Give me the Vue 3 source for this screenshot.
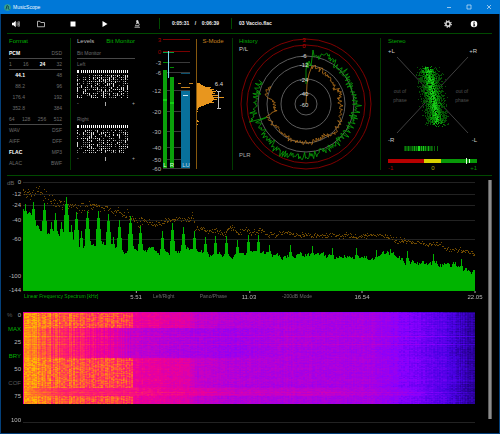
<template>
  <div class="window">
    <header class="titlebar">
      <svg class="logo" viewBox="0 0 14 14" width="7" height="7">
        <circle cx="7" cy="7" r="6.5" fill="#3aa58c"/>
        <path d="M4 11 6 3l3 2-1 4 3 2" fill="none" stroke="#0c3d52" stroke-width="1.8"/>
      </svg>
      <span class="app-name">MusicScope</span>
      <button class="win-btn" aria-label="Minimize"><svg viewBox="0 0 6 6" width="6" height="6"><path d="M1 3.5h4"/></svg></button>
      <button class="win-btn" aria-label="Maximize"><svg viewBox="0 0 6 6" width="6" height="6"><path d="M1 1h4v4H1z"/></svg></button>
      <button class="win-btn" aria-label="Close"><svg viewBox="0 0 6 6" width="6" height="6"><path d="m1 1 4 4M5 1 1 5"/></svg></button>
    </header>

    <nav class="toolbar">
      <button class="tool first" aria-label="Volume">
        <svg viewBox="0 0 16 16" width="8" height="8"><path d="M0 5.5h3l4.5-4v13l-4.5-4H0z" fill="#fff"/><path d="M9.5 5q2 3 0 6M11.500 3.500q3.500 4.500 0 9M13.500 2q4.500 6 0 12" fill="none" stroke="#ddd" stroke-width="1.3"/></svg>
      </button>
      <button class="tool" aria-label="Open file">
        <svg viewBox="0 0 16 16" width="8" height="8"><path d="M1 13.500V2.500h5l1.500 2.500H15v8.500z" fill="none" stroke="#ccc" stroke-width="1.7"/></svg>
      </button>
      <button class="tool" aria-label="Stop">
        <svg viewBox="0 0 16 16" width="8" height="8"><path d="M3 3h10v10H3z" fill="#fff"/></svg>
      </button>
      <button class="tool" aria-label="Play">
        <svg viewBox="0 0 16 16" width="8" height="8"><path d="M3 2l10 6-10 6z" fill="#fff"/></svg>
      </button>
      <button class="tool" aria-label="Analyze">
        <svg viewBox="0 0 16 16" width="8" height="8"><path d="M7 1.500l2.500-.8 1.500 5-3 1zM3 14.500h11" fill="#ddd" stroke="#ddd" stroke-width="1.500"/><path d="M4 11.500h6M10.500 5.500q4 3 0 7.500M5.500 8.500l2.500-2" fill="none" stroke="#ddd" stroke-width="1.700"/></svg>
      </button>
      <div class="time"><span>0:05:31</span><span>/</span><span>0:06:39</span></div>
      <div class="file">03 Vaccio.flac</div>
      <button class="tool side" aria-label="Settings">
        <svg viewBox="0 0 16 16" width="8" height="8">
          <circle cx="8" cy="8" r="4.300" fill="none" stroke="#ddd" stroke-width="3"/>
          <circle cx="8" cy="8" r="6.500" fill="none" stroke="#ddd" stroke-width="2.500" stroke-dasharray="2.550 2.550"/>
        </svg>
      </button>
      <button class="tool side" aria-label="Info">
        <svg viewBox="0 0 16 16" width="8" height="8"><circle cx="8" cy="8" r="6.500" fill="#fff"/><path d="M7 3.500h2.500v2H7zM6 7h3.500v4.500h1v1H6v-1h1V8H6z" fill="#000"/></svg>
      </button>
    </nav>

    <section class="panels">
      <div class="panel format">
        <h2 class="green">Format</h2>
        <div class="row ruled"><b>PCM</b><span>DSD</span></div>
        <div class="row ruled"><span>1</span><span>16</span><b>24</b><span>32</span></div>
        <div v-for="(r, i) in rates" :key="r[0]" class="row">
          <component :is="i === 0 ? 'b' : 'span'" class="rate">{{ r[0] }}</component><span>{{ r[1] }}</span>
        </div>
        <div class="row ruled"><span>64</span><span>128</span><span>256</span><span>512</span></div>
        <div v-for="f in containers" :key="f[0]" class="row">
          <component :is="f[0] === 'FLAC' ? 'b' : 'span'">{{ f[0] }}</component><span>{{ f[1] }}</span>
        </div>
      </div>

      <div class="panel levels divided">
        <div class="tabs">
          <button class="tab">Levels</button>
          <button class="tab green">Bit Monitor</button>
        </div>
        <div class="row ruled"><span>Bit Monitor</span></div>
        <div v-for="ch in channels" :key="ch.name" class="channel">
          <div class="row"><span>{{ ch.name }}</span></div>
          <svg class="bits" viewBox="0 0 58 28" shape-rendering="crispEdges">
            <path :d="ch.head" fill="#fff"/>
            <path :d="ch.dim" fill="#888"/>
            <path :d="ch.lit" fill="#ddd"/>
          </svg>
          <div class="row balance"><span>-</span><i></i><span>+</span></div>
        </div>
      </div>

      <div class="panel">
        <svg class="chart" viewBox="0 0 87 132">
          <g shape-rendering="crispEdges">
            <rect v-for="s in meterScale" :key="s.db" x="18" :y="s.y" width="27" height="1" :fill="s.db >= 0 ? '#7a0000' : '#3a3a3a'"/>
            <rect x="18" y="14" width="11" height="1" fill="#00a040"/>
            <rect x="18" y="24" width="5" height="1" fill="#008a00"/>
            <rect x="25" y="29" width="4" height="1" fill="#008a00"/>
            <rect x="18" y="32" width="4" height="98" fill="#0aa00a"/>
            <rect x="25" y="39" width="4" height="91" fill="#0aa00a"/>
            <rect x="18" y="61" width="4" height="2" fill="#12d012"/>
            <rect x="25" y="64" width="4" height="2" fill="#12d012"/>
            <rect x="23" y="13" width="1" height="27" fill="#7fd8f0"/>
            <rect x="36" y="53" width="9" height="77" fill="#08709c"/>
            <rect x="36" y="35" width="9" height="1" fill="#0a506e"/>
            <rect x="38" y="57" width="5" height="1" fill="#cfe8f4"/>
            <path d="M33 45h3v1h-3zM44 45h4v1h-4zM36 49h9v1h-9z" fill="#c88420"/>
            <rect x="51" y="1" width="1" height="130" fill="#86580e"/>
            <path :d="loudness" fill="#e8961e"/>
            <path d="M71 53h1v-1h-1z" fill="#bbb"/>
            <path d="M72 53h4v1h-2v16h2v1h-4v-1h1V54h-1z" fill="#bbb"/>
          </g>
          <text v-for="s in meterScale" :key="'t' + s.db" x="16" :y="s.y + 3" class="axis end" :fill="s.db >= 0 ? '#a00000' : '#bbb'">{{ s.db }}</text>
          <text x="20" y="129" class="axis mid" fill="#dfd">L</text>
          <text x="27" y="129" class="axis mid" fill="#dfd">R</text>
          <text x="41" y="129" class="axis mid" fill="#b8dcf0">LU</text>
          <text x="74" y="48" class="axis mid" fill="#ddd">6.4</text>
          <text x="68" y="5" class="axis mid" fill="#c88420">S-Mode</text>
        </svg>
      </div>

      <div class="panel divided">
        <svg class="chart" viewBox="0 0 148 132">
          <g fill="none">
            <circle cx="74" cy="66" r="65" stroke="#800000"/>
            <circle cx="74" cy="66" r="59" stroke="#800000"/>
            <circle v-for="r in [48, 39, 25, 11]" :key="r" cx="74" cy="66" :r="r" stroke="#5c5c5c"/>
            <polyline :points="ringLufs" stroke="#b8741c" stroke-width="0.800"/>
            <polyline :points="ringPeak" stroke="#089a08" stroke-width="0.900"/>
          </g>
          <text v-for="l in ringLabels" :key="l[0]" x="72" :y="l[1] + 2" class="axis mid" :fill="l[0] >= 0 ? '#c00000' : '#ddd'">{{ l[0] }}</text>
          <text x="7" y="5" class="axis" fill="#00a800">History</text>
          <text x="7" y="13" class="axis" fill="#ccc">P/L</text>
          <text x="7" y="119" class="axis" fill="#aaa">PLR</text>
        </svg>
      </div>

      <div class="panel divided">
        <svg class="chart" viewBox="0 0 119 132">
          <path d="M17 19 88 95M17 95 88 19" stroke="#404040" fill="none"/>
          <g shape-rendering="crispEdges">
            <path :d="cloud[0]" fill="#055005"/>
            <path :d="cloud[1]" fill="#079007"/>
            <path :d="cloud[2]" fill="#18c818"/>
            <rect x="24" y="108" width="29" height="5" fill="#064d06"/>
            <rect v-for="(b, i) in stripes" :key="i" :x="b[0]" y="108" width="1" height="5" :fill="b[1]"/>
            <rect x="8" y="121" width="36" height="4" fill="#b80000"/>
            <rect x="44" y="121" width="17" height="4" fill="#d8d000"/>
            <rect x="61" y="121" width="36" height="4" fill="#089808"/>
            <path d="M86 120h1v6h-1zM89 121h1v4h-1z" fill="#dfd"/>
          </g>
          <text x="8" y="5" class="axis" fill="#00a800">Stereo</text>
          <text x="8" y="15" class="axis" fill="#ccc">+L</text>
          <text x="97" y="15" class="axis end" fill="#ccc">+R</text>
          <text x="8" y="104" class="axis" fill="#ccc">-R</text>
          <text x="97" y="104" class="axis end" fill="#ccc">-L</text>
          <g class="small mid" fill="#505050">
            <text x="20" y="55">out of</text>
            <text x="20" y="64">phase</text>
            <text x="82" y="55">out of</text>
            <text x="82" y="64">phase</text>
          </g>
          <text x="8" y="132" class="axis" fill="#b00000">-1</text>
          <text x="53" y="132" class="axis mid" fill="#b8b000">0</text>
          <text x="97" y="132" class="axis end" fill="#009000">+1</text>
        </svg>
      </div>
    </section>

    <main class="lower">
      <div class="charts">
        <section class="spectrum">
          <svg class="gutter" viewBox="0 0 22 116" width="22" height="116">
            <text x="6" y="9" class="axis" fill="#666">dB</text>
            <text v-for="g in dbGrid" :key="g.db" x="20" :y="g.y + 2" class="axis end" fill="#bbb">{{ g.db }}</text>
          </svg>
          <svg class="plot" viewBox="0 0 452 116" preserveAspectRatio="none" shape-rendering="crispEdges">
            <rect v-for="g in dbGrid.slice(0, 5)" :key="g.db" x="0" :y="g.y" width="452" height="1" fill="#222"/>
            <path :d="maxDots" fill="#704a00"/>
            <path :d="spectrum" fill="#00b400"/>
          </svg>
          <div class="freqs">
            <div class="quarter"><button class="green">Linear Frequency Spectrum [kHz]</button><span class="tick">5.51</span></div>
            <div class="quarter modes"><button>Left/Right</button><button>Pano/Phase</button><span class="tick">11.03</span></div>
            <div class="quarter range"><button>-200dB Mode</button><span class="tick">16.54</span></div>
            <div class="quarter"><span class="tick">22.05</span></div>
          </div>
        </section>

        <section class="spectrogram">
          <div class="percent">
            <div><span class="unit">%</span><span>0</span></div>
            <button class="green">MAX</button>
            <span>25</span>
            <button class="green">BRY</button>
            <span>50</span>
            <button>COF</button>
            <span>75</span>
          </div>
          <canvas ref="heat" width="452" height="92"></canvas>
          <span class="hundred">100</span>
          <div class="floor"></div>
        </section>
      </div>
      <div class="scrollbar"></div>
    </main>
  </div>
</template>

<script setup>
import { ref, onMounted } from 'vue'

const heat = ref(null)

const rates = [['44.1', '48'], ['88.2', '96'], ['176.4', '192'], ['352.8', '384']]
const containers = [['WAV', 'DSF'], ['AIFF', 'DFF'], ['FLAC', 'MP3'], ['ALAC', 'BWF']]

// seeded so that the traces look the same on every load
function makeRandom(seed) {
  let s = seed
  return () => {
    s = (s * 1664525 + 1013904223) >>> 0
    return s / 4294967296
  }
}
function lerp(points, x) {
  if (x <= points[0][0]) return points[0][1]
  for (let i = 1; i < points.length; i++) {
    const [x1, y1] = points[i]
    const [x0, y0] = points[i - 1]
    if (x <= x1) return y0 + (y1 - y0) * (x - x0) / (x1 - x0)
  }
  return points[points.length - 1][1]
}
const dot = (x, y, w = 1, h = 1) => `M${x} ${y}h${w}v${h}h-${w}z`

function bitMatrix(seed) {
  const rnd = makeRandom(seed)
  let head = '', dim = '', lit = ''
  for (let c = 0; c < 26; c++) {
    if (c !== 1) head += c === 0 ? dot(0, 0, 2, 3) : dot(c * 2, 0, 1, 3)
    const density = c === 0 ? 0.8 : c < 3 ? 0.2 : 0.5 + rnd() * 0.4
    for (let r = 0; r < 12; r++) {
      if (rnd() > density) continue
      if (rnd() < 0.45) dim += dot(c * 2, 5 + r * 2, 1, 1)
      else lit += dot(c * 2, 5 + r * 2, 1, rnd() < 0.4 && r < 11 ? 2 : 1)
    }
  }
  return { head, dim, lit }
}
const channels = [
  { name: 'Left', ...bitMatrix(11) },
  { name: 'Right', ...bitMatrix(29) },
]

const meterScale = [[3, 1], [0, 13], [-3, 24], [-6, 34], [-12, 52], [-20, 73], [-30, 93], [-40, 109], [-50, 121], [-60, 130]]
  .map(([db, y]) => ({ db, y }))

const loudnessWidths = [3, 4, 6, 8, 14, 13, 17, 15, 19, 16, 18, 15, 22, 16, 27, 17, 20, 16, 15, 17, 12, 9, 7, 4, 2, 1, 1, 0, 1]
const loudness = loudnessWidths.map((w, i) => w ? dot(52, 45 + i, w) : '').join('') + dot(52, 82, 1) + dot(52, 83, 2) + dot(52, 86, 1)

const ringLabels = [[3, 2], [0, 8], [-6, 18], [-12, 27], [-24, 42], [-40, 56], [-60, 67]]
const polar = (deg, r) => {
  const a = deg * Math.PI / 180
  return `${(74 + Math.sin(a) * r).toFixed(1)},${(66 - Math.cos(a) * r).toFixed(1)}`
}
function ring(seed, start, shape, noise) {
  const rnd = makeRandom(seed)
  const pts = [...start]
  for (let d = 10; d <= 297; d += 1.2) pts.push(polar(d, lerp(shape, d) + (rnd() + rnd() - 1) * noise))
  return pts.join(' ')
}
const ringPeak = ring(5, ['74,46', '74,32', '75,24', '76,30', '77,23', '79,28', '81,12'],
  [[10, 48], [20, 53], [40, 50], [60, 48], [90, 51], [120, 49], [150, 49], [180, 53], [210, 53], [240, 51], [250, 53], [251, 38], [252, 55], [270, 51], [297, 49]], 6)
const ringLufs = ring(8, ['74,66', '75,46', '77,36', '80,28'],
  [[10, 38], [30, 37], [45, 35], [60, 33], [70, 35], [90, 34], [110, 37], [135, 40], [150, 37], [180, 39], [230, 38], [252, 40], [258, 30], [275, 32], [282, 40], [297, 40]], 3)

function stereoCloud() {
  const rnd = makeRandom(77)
  const layers = ['', '', '']
  for (let i = 0; i < 2200; i++) {
    const along = rnd()
    const off = (rnd() + rnd() + rnd() + rnd() - 2) * 9
    const x = Math.round(48 + along * 9 + off)
    const y = Math.round(31 + along * 54 + (rnd() + rnd() - 1) * 5)
    const near = Math.abs(off) / 8
    const level = rnd() > near + 0.6 ? 2 : rnd() > near + 0.1 ? 1 : 0
    layers[level] += dot(x, y)
  }
  return layers
}
const cloud = stereoCloud()
const stripes = [[25, '#0b7a0b'], [28, '#0a940a'], [32, '#0c7c0c'], [34, '#10b010'], [36, '#0b8a0b'], [38, '#1de01d'], [39, '#1de01d'], [41, '#12b812'], [43, '#18d018'], [45, '#0ca00c'], [46, '#064006'], [48, '#14b414'], [51, '#0a700a'], [54, '#086008'], [57, '#0a6a0a']]

const dbGrid = [[0, 6], [-12, 18], [-24, 29], [-40, 44], [-60, 63], [-100, 100], [-144, 114]].map(([db, y]) => ({ db, y }))

const noiseFloor = [[0, 34], [5, 37], [10, 44], [15, 49], [20, 53], [27, 58], [38, 60], [45, 67], [60, 69], [75, 67], [90, 71], [100, 75], [125, 74], [145, 77], [165, 74], [190, 79], [212, 81], [225, 75], [240, 78], [260, 80], [290, 79], [320, 80], [350, 83], [372, 77], [380, 85], [400, 88], [430, 89], [440, 93], [452, 97]]
const peaks = [[2, 28], [10, 26], [21, 27], [28, 46], [32, 37], [38, 46], [43, 21], [48, 49], [53, 36], [58, 55], [64, 35], [75, 35], [85, 38], [90, 61], [96, 44], [107, 40], [117, 50], [139, 55], [149, 47], [160, 51], [171, 55], [182, 61], [192, 60], [203, 60], [214, 64], [225, 59], [235, 59], [246, 69], [267, 69], [289, 70], [309, 72], [333, 72], [353, 74], [367, 73], [384, 75], [410, 78], [438, 83]]

function buildSpectrum() {
  const rnd = makeRandom(41)
  let d = 'M0 115V59'
  let noise = 0
  for (let x = 0; x < 452; x++) {
    noise = noise * 0.6 + (rnd() - 0.5) * 5
    let y = lerp(noiseFloor, x) + noise
    for (const [px, py] of peaks) {
      const gap = Math.abs(x - px)
      if (gap < 4) y = Math.min(y, py + gap * gap * 2.6 + gap * 4)
    }
    d += `H${x}V${Math.round(y)}`
  }
  return d + 'H452V115z'
}
const spectrum = buildSpectrum()

const maxCurve = [[0, 18], [7, 19], [15, 14], [24, 21], [34, 27], [44, 28], [54, 31], [74, 29], [87, 34], [94, 34], [107, 39], [114, 46], [120, 44], [130, 48], [140, 46], [150, 43], [167, 44], [169, 38], [172, 52], [184, 54], [194, 54], [200, 58], [209, 51], [215, 57], [222, 53], [229, 56], [237, 53], [244, 59], [265, 56], [270, 59], [360, 59], [374, 64], [394, 66], [414, 68], [427, 73], [440, 74], [452, 79]]
function buildDots() {
  const rnd = makeRandom(97)
  let d = ''
  for (let x = 0; x < 452; x++) {
    const spread = x < 120 ? 9 : 5
    const n = rnd() < 0.45 ? 2 : 1
    for (let i = 0; i < n; i++) d += dot(x, Math.round(lerp(maxCurve, x) + (rnd() + rnd() - 1) * spread / 1.4))
  }
  return d
}
const maxDots = buildDots()

const palette = [
  [0, [28, 0, 120]], [0.12, [72, 0, 225]], [0.25, [135, 0, 255]], [0.45, [195, 0, 200]],
  [0.6, [238, 0, 150]], [0.72, [255, 36, 100]], [0.85, [255, 110, 40]], [1, [255, 190, 0]],
]
function heatColor(v) {
  return [0, 1, 2].map(k => lerp(palette.map(p => [p[0], p[1][k]]), v))
}
const tail = [[260, 0.38], [350, 0.35], [380, 0.25], [420, 0.15], [452, 0.03]]
const calm = [[0, 0.97], [12, 0.86], [30, 0.75], [60, 0.68], [90, 0.55], [110, 0.45], [160, 0.38], [210, 0.33], ...tail]
const loud = [[0, 0.97], [12, 0.91], [30, 0.83], [60, 0.8], [109, 0.76], [110, 0.6], [165, 0.54], [172, 0.45], [215, 0.39], ...tail]
const flat = [[0, 0.95], [12, 0.84], [40, 0.73], [110, 0.66], [165, 0.58], [215, 0.47], [300, 0.44], [350, 0.38], [380, 0.3], [452, 0.03]]
const grain = [[109, 0.07], [110, 0.08], [340, 0.07], [452, 0.04]]

onMounted(() => {
  const ctx = heat.value.getContext('2d')
  const img = ctx.createImageData(452, 92)
  const rnd = makeRandom(123)
  const cols = Array.from({ length: 452 }, () => rnd() - 0.5)
  const cells = Array.from({ length: 226 * 92 }, () => rnd() - 0.5)
  for (let y = 0; y < 92; y++) {
    const rowShift = (rnd() - 0.5) * 0.04
    const band = y < 16 ? loud : y < 46 ? calm : y < 76 ? loud : y < 84 ? flat : loud
    const streak = y === 24 || y === 32 ? 0.08 : y === 80 ? 0.05 : 0
    for (let x = 0; x < 452; x++) {
      const amp = band === loud && x < 110 ? 0.15 : lerp(grain, x)
      let v = lerp(band, x) + rowShift + streak
      v += cells[y * 226 + (x >> 1)] * amp
      v += cols[x] * (band === flat ? 0.02 : x < 110 ? 0.12 : 0.04)
      if (y === 0 || x === 0) v = Math.min(v, 0.64) - 0.06
      const [r, g, b] = heatColor(Math.max(0, Math.min(1, v)))
      const i = (y * 452 + x) * 4
      img.data[i] = r
      img.data[i + 1] = g
      img.data[i + 2] = b
      img.data[i + 3] = 255
    }
  }
  ctx.putImageData(img, 0, 0)
})
</script>

<style>
body { margin: 0; background: #000; }
</style>

<style scoped>
.window {
  box-sizing: border-box;
  min-height: 100vh;
  border: 1px solid #04407a;
  border-top: 0;
  background: #000;
  color: #6c6c6c;
  font: 5px/7px "Liberation Sans", Arial, sans-serif;
}
button {
  padding: 0;
  border: 0;
  background: none;
  color: inherit;
  font: inherit;
  cursor: pointer;
  white-space: nowrap;
}
svg { display: block; }
.green { color: #00b000; }

.titlebar { display: flex; align-items: center; height: 14px; margin: 0 -1px; padding: 0 1px 0 4px; background: #0078d7; color: #f0f8ff; }
.app-name { flex: 1; margin-left: 2px; }
.win-btn { display: flex; align-items: center; justify-content: center; width: 20px; height: 14px; }
.win-btn path { fill: none; stroke: #d4e8f8; stroke-width: 0.7; }

.toolbar { display: flex; align-items: center; height: 19px; margin: 0 7px 0 6px; border-bottom: 1px solid #004a00; color: #eee; font-size: 5px; font-weight: bold; }
.tool { display: flex; align-items: center; justify-content: center; width: 32px; height: 19px; }
.tool.first { width: 18px; }
.tool.side { width: 26px; }
.tool.side:last-child { margin-right: 5px; }
.time { box-sizing: border-box; display: flex; justify-content: space-between; width: 72px; margin-left: 6px; padding: 2px 12px; border-left: 1px solid #004a00; }
.file { flex: 1; padding: 2px 7px; border-left: 1px solid #004a00; }

.panels { display: grid; grid-template-columns: 69fr 75fr 87fr 148fr 119fr; padding: 4px 0 5px; }
.panel { position: relative; min-width: 0; }
.divided { box-shadow: inset 1px 0 #003c00; }
.chart { width: 100%; height: auto; overflow: visible; }
.format { padding: 0 8px; }
h2 { height: 10px; margin: 0; font-size: 6px; font-weight: normal; line-height: 7px; }
.row { box-sizing: border-box; display: flex; justify-content: space-between; height: 11px; line-height: 11px; }
.row b { color: #fff; }
.ruled { border-bottom: 1px solid #484848; }
.rate { width: 16px; text-align: right; }
.levels { padding: 0 10px 0 7px; }
.tabs { display: flex; justify-content: space-between; height: 10px; font-size: 6px; }
.tab { height: 7px; line-height: 7px; color: #bbb; }
.tab.green { color: #00b000; }
.channel + .channel { margin-top: 5px; }
.bits { width: 100%; height: auto; }
.balance { align-items: center; color: #aaa; }
.balance i { width: 1px; height: 4px; background: #aaa; }

.axis { font-size: 6px; }
.small { font-size: 5px; }
.end { text-anchor: end; }
.mid { text-anchor: middle; }

.lower { display: flex; margin: 0 7px 0 6px; border-top: 1px solid #004a00; }
.charts { flex: 1; min-width: 0; margin: 0 13px 0 -6px; }
.scrollbar { box-sizing: border-box; width: 4px; margin: 4px 0; border: solid #5c5c5c; border-width: 0 1px; background: #8c8c8c; }
.spectrum { display: grid; grid-template-columns: 22px 1fr; }
.plot { width: 100%; height: 116px; }
.freqs { grid-column: 2; display: grid; grid-template-columns: repeat(4, 1fr); height: 14px; }
.quarter { position: relative; display: flex; align-items: flex-start; padding: 1px 0 0 1px; }
.modes { justify-content: space-between; padding: 1px 22px 0 17px; }
.range { padding-left: 33px; }
.tick { position: absolute; top: 2px; right: 0; transform: translateX(50%); color: #bbb; font-size: 6px; }
.tick::before { content: ""; position: absolute; top: -3px; left: 50%; width: 1px; height: 2px; background: #aaa; }

.spectrogram { display: grid; grid-template-columns: 22px 1fr; margin-top: 6px; }
.percent { display: flex; flex-direction: column; justify-content: space-between; align-items: flex-end; height: 88px; padding-right: 2px; color: #bbb; font-size: 6px; }
.percent div { display: flex; justify-content: space-between; width: 14px; }
.percent button, .unit { color: #5a5a5a; }
.percent .green { color: #00b000; }
canvas { display: block; width: 100%; height: 92px; }
.hundred { height: 5px; padding: 13px 2px 0 0; color: #bbb; font-size: 6px; line-height: 7px; text-align: right; }
.floor { height: 18px; border-bottom: 1px solid #222; }
</style>
